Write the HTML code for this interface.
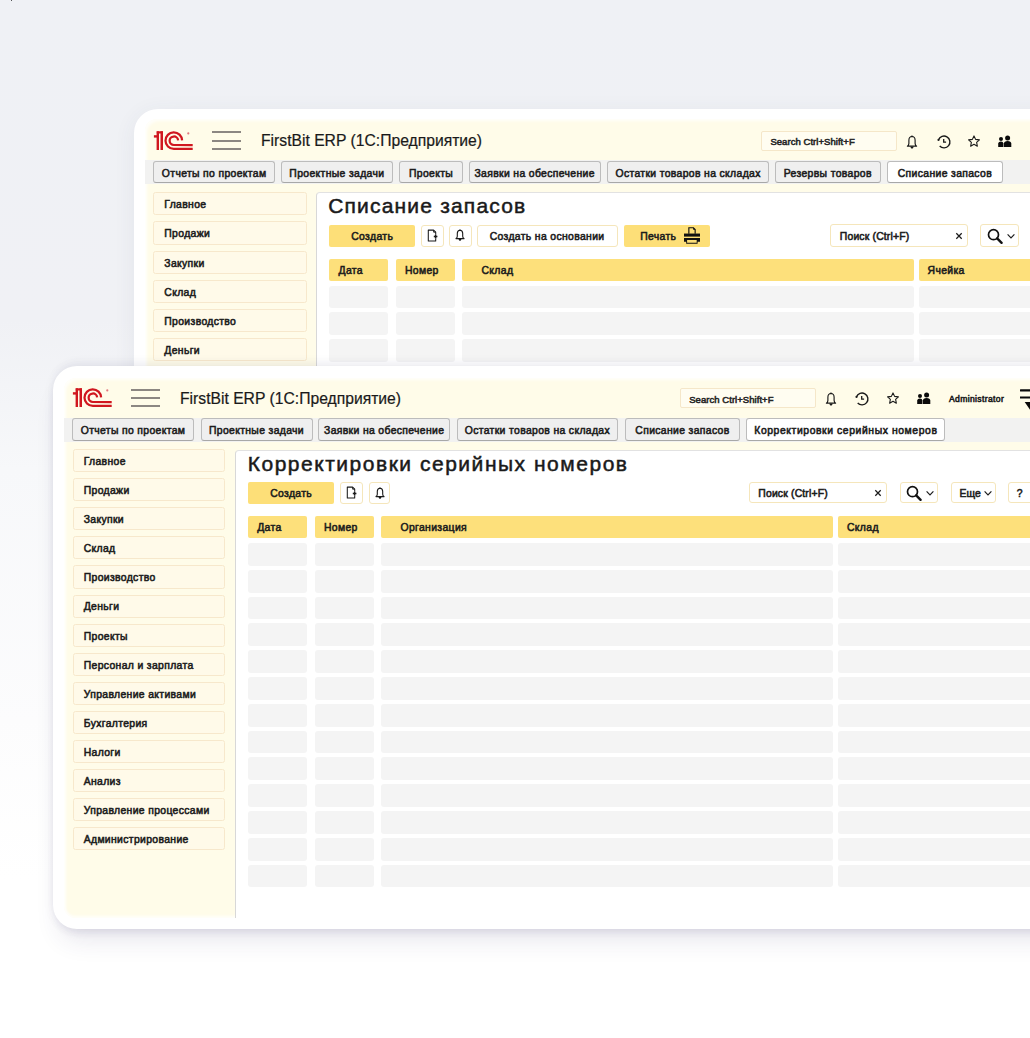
<!DOCTYPE html><html><head><meta charset="utf-8"><style>
*{margin:0;padding:0;box-sizing:border-box}
html,body{width:1030px;height:1038px;overflow:hidden}
body{position:relative;font-family:"Liberation Sans",sans-serif;color:#1e1e1e;
 background:linear-gradient(180deg,#eff1f5 0px,#f0f1f5 320px,#f7f8fa 470px,#fcfcfd 720px,#ffffff 880px)}
.a{position:absolute}
.t{position:absolute;white-space:nowrap;line-height:1}
.ham{position:absolute;width:29.6px;height:2.2px;background:#8c8782}
.search{position:absolute;background:#fffdf1;border:1px solid #f5e7c9;border-radius:2px}
.band{position:absolute;background:#f2f2f1}
.tab{position:absolute;background:#efefef;border:1px solid #bcbcbc;border-bottom:1.6px solid #a8a8a8;border-radius:3px}
.tab.act{background:#fff}
.side{position:absolute;background:#fffae9;border:1px solid #f7e8cc;border-radius:2.5px}
.yb{position:absolute;background:#fddf78;border-radius:2px}
.wb{position:absolute;background:#fff;border:1px solid #f5e6bb;border-radius:3px}
.hd{position:absolute;background:#fde07b;border-radius:2px}
.row{position:absolute;background:#f4f4f4;border-radius:3px}
</style></head><body>
<div class="a" style="left:10.6px;top:0;width:1.6px;height:1.2px;background:#222;border-radius:1px"></div>
<div class="a" style="left:134px;top:109px;width:966px;height:700px;background:#fff;border-radius:24px 0 0 24px;box-shadow:0 4px 22px rgba(60,70,100,0.07)"></div>
<div class="a" style="left:144.5px;top:119px;width:955.5px;height:600px;background:#fffce9;border-radius:12px 0 0 12px;box-shadow:inset 2px 2px 3px rgba(255,255,255,0.8),inset 0 -2px 3px rgba(255,255,255,0.8)"></div>
<div class="a" style="left:315.7px;top:192px;width:784.3px;height:600px;background:#fff;border-left:1px solid #d8d8d8;border-top:1px solid #e2e2e2;border-radius:4px 0 0 0"></div>
<svg class="a" style="left:150px;top:125px" width="46" height="28" viewBox="0 0 46 28">
<g fill="#d0171f">
<rect x="6.8" y="6.3" width="6.1" height="2.2"/>
<rect x="6.6" y="6.3" width="2.4" height="18.7"/>
<rect x="10.5" y="6.3" width="2.5" height="18.7"/>
<rect x="3.9" y="10.2" width="5" height="2.4"/>
</g>
<g fill="none" stroke="#d0171f" stroke-width="2.25">
<path d="M32.1 15.4 A8.3 8.3 0 1 0 23.8 23.95 L42.7 23.95"/>
<path d="M28.1 15.4 A4.25 4.25 0 1 0 23.8 20.0 L42.7 20.0"/>
</g>
<circle cx="38.3" cy="8.4" r="1.1" fill="#e07a80"/>
</svg>
<div class="ham" style="left:211.7px;top:131.30px"></div>
<div class="ham" style="left:211.7px;top:139.60px"></div>
<div class="ham" style="left:211.7px;top:147.70px"></div>
<div class="t" style="left:261.00px;top:133.11px;font-size:15.7px;font-weight:400;color:#1a1a1a;letter-spacing:0px;-webkit-text-stroke:0.2px #1a1a1a">FirstBit ERP (1С:Предприятие)</div>
<div class="search" style="left:761.00px;top:131.00px;width:135.70px;height:19.60px;" ></div>
<div class="t" style="left:770.40px;top:137.43px;font-size:9.50px;font-weight:400;-webkit-text-stroke:0.55px #262626;color:#262626;letter-spacing:0.04999999999999999px;">Search Ctrl+Shift+F</div>
<svg class="a" style="left:903.3px;top:132.6px" width="18" height="18" viewBox="-9 -9 18 18"><g transform="scale(1.15)">
<path d="M-4.0 3.6 Q-2.8 2.9 -2.7 1.2 L-2.7 -1.6 Q-2.7 -4.6 0 -4.8 Q2.7 -4.6 2.7 -1.6 L2.7 1.2 Q2.8 2.9 4.0 3.6 Z" fill="none" stroke="#1a1a1a" stroke-width="1.0" stroke-linejoin="round"/>
<path d="M-0.9 -4.5 L0 -6.0 L0.9 -4.5 Z" fill="#1a1a1a"/>
<path d="M-1.5 4.0 L1.5 4.0 Q1.2 5.8 0 5.9 Q-1.2 5.8 -1.5 4.0 Z" fill="#1a1a1a"/></g></svg>
<svg class="a" style="left:934.6px;top:132.5px" width="18" height="18" viewBox="-9 -9 18 18"><g fill="none" stroke="#1a1a1a" stroke-width="1.4">
<path d="M-5.51 -2.11 A5.9 5.9 0 1 1 -4.31 4.02"/>
<path d="M-0.3 -2.9 L-0.3 0.1 L2.1 0.1" stroke-width="1.3"/></g>
<circle cx="-5.51" cy="-2.11" r="1.05" fill="#1a1a1a"/></svg>
<svg class="a" style="left:966.3px;top:133.0px" width="16" height="16" viewBox="-8 -8 16 16"><polygon points="0.00,-5.70 1.62,-2.22 5.42,-1.76 2.62,0.85 3.35,4.61 0.00,2.75 -3.35,4.61 -2.62,0.85 -5.42,-1.76 -1.62,-2.22" fill="none" stroke="#1a1a1a" stroke-width="1.1" stroke-linejoin="round" transform="translate(0,0.6)"/></svg>
<svg class="a" style="left:998.3px;top:134.6px" width="14" height="13" viewBox="0 0 14 13"><g fill="#0a0a0a">
<circle cx="3" cy="4.0" r="2.0"/><path d="M0.2 12 L0.2 8.6 Q0.4 6.6 3 6.6 Q5.2 6.6 5.4 8.6 L5.4 12 Z"/>
<circle cx="9.6" cy="2.9" r="2.5"/><path d="M5.9 12 L5.9 8.4 Q6.1 5.9 9.6 5.9 Q13.1 5.9 13.3 8.4 L13.3 12 Z"/>
</g></svg>
<div class="band" style="left:144.50px;top:160.00px;width:955.50px;height:24.00px;" ></div>
<div class="tab" style="left:152.80px;top:160.80px;width:122.70px;height:22.40px;" ></div>
<div class="t" style="left:153.30px;width:121.70px;text-align:center;top:168.97px;font-size:10.40px;font-weight:400;-webkit-text-stroke:0.55px #1c1c1c;color:#1c1c1c;letter-spacing:0.35px">Отчеты по проектам</div>
<div class="tab" style="left:281.00px;top:160.80px;width:111.80px;height:22.40px;" ></div>
<div class="t" style="left:281.50px;width:110.80px;text-align:center;top:168.97px;font-size:10.40px;font-weight:400;-webkit-text-stroke:0.55px #1c1c1c;color:#1c1c1c;letter-spacing:0.35px">Проектные задачи</div>
<div class="tab" style="left:399.30px;top:160.80px;width:63.50px;height:22.40px;" ></div>
<div class="t" style="left:399.80px;width:62.50px;text-align:center;top:168.97px;font-size:10.40px;font-weight:400;-webkit-text-stroke:0.55px #1c1c1c;color:#1c1c1c;letter-spacing:0.35px">Проекты</div>
<div class="tab" style="left:468.50px;top:160.80px;width:132.30px;height:22.40px;" ></div>
<div class="t" style="left:469.00px;width:131.30px;text-align:center;top:168.97px;font-size:10.40px;font-weight:400;-webkit-text-stroke:0.55px #1c1c1c;color:#1c1c1c;letter-spacing:0.35px">Заявки на обеспечение</div>
<div class="tab" style="left:607.00px;top:160.80px;width:162.20px;height:22.40px;" ></div>
<div class="t" style="left:607.50px;width:161.20px;text-align:center;top:168.97px;font-size:10.40px;font-weight:400;-webkit-text-stroke:0.55px #1c1c1c;color:#1c1c1c;letter-spacing:0.35px">Остатки товаров на складах</div>
<div class="tab" style="left:774.90px;top:160.80px;width:105.80px;height:22.40px;" ></div>
<div class="t" style="left:775.40px;width:104.80px;text-align:center;top:168.97px;font-size:10.40px;font-weight:400;-webkit-text-stroke:0.55px #1c1c1c;color:#1c1c1c;letter-spacing:0.35px">Резервы товаров</div>
<div class="tab act" style="left:886.80px;top:160.80px;width:116.20px;height:22.40px;" ></div>
<div class="t" style="left:887.30px;width:115.20px;text-align:center;top:168.97px;font-size:10.40px;font-weight:400;-webkit-text-stroke:0.55px #1c1c1c;color:#1c1c1c;letter-spacing:0.35px">Списание запасов</div>
<div class="side" style="left:153.30px;top:192.20px;width:153.70px;height:23.20px;" ></div>
<div class="t" style="left:164.30px;top:200.17px;font-size:10.40px;font-weight:400;-webkit-text-stroke:0.55px #1c1c1c;color:#1c1c1c;letter-spacing:0.35px;">Главное</div>
<div class="side" style="left:153.30px;top:221.40px;width:153.70px;height:23.20px;" ></div>
<div class="t" style="left:164.30px;top:229.37px;font-size:10.40px;font-weight:400;-webkit-text-stroke:0.55px #1c1c1c;color:#1c1c1c;letter-spacing:0.35px;">Продажи</div>
<div class="side" style="left:153.30px;top:250.60px;width:153.70px;height:23.20px;" ></div>
<div class="t" style="left:164.30px;top:258.57px;font-size:10.40px;font-weight:400;-webkit-text-stroke:0.55px #1c1c1c;color:#1c1c1c;letter-spacing:0.35px;">Закупки</div>
<div class="side" style="left:153.30px;top:279.80px;width:153.70px;height:23.20px;" ></div>
<div class="t" style="left:164.30px;top:287.77px;font-size:10.40px;font-weight:400;-webkit-text-stroke:0.55px #1c1c1c;color:#1c1c1c;letter-spacing:0.35px;">Склад</div>
<div class="side" style="left:153.30px;top:309.00px;width:153.70px;height:23.20px;" ></div>
<div class="t" style="left:164.30px;top:316.97px;font-size:10.40px;font-weight:400;-webkit-text-stroke:0.55px #1c1c1c;color:#1c1c1c;letter-spacing:0.35px;">Производство</div>
<div class="side" style="left:153.30px;top:338.20px;width:153.70px;height:23.20px;" ></div>
<div class="t" style="left:164.30px;top:346.17px;font-size:10.40px;font-weight:400;-webkit-text-stroke:0.55px #1c1c1c;color:#1c1c1c;letter-spacing:0.35px;">Деньги</div>
<div class="side" style="left:153.30px;top:367.40px;width:153.70px;height:23.20px;" ></div>
<div class="t" style="left:164.30px;top:375.37px;font-size:10.40px;font-weight:400;-webkit-text-stroke:0.55px #1c1c1c;color:#1c1c1c;letter-spacing:0.35px;">Проекты</div>
<div class="t" style="left:328.20px;top:195.12px;font-size:21px;font-weight:400;color:#1a1a1a;letter-spacing:1.19px;-webkit-text-stroke:0.5px #1a1a1a">Списание запасов</div>
<div class="yb" style="left:329.00px;top:224.50px;width:86.40px;height:22.50px;" ></div>
<div class="t" style="left:351.25px;top:232.07px;font-size:10.40px;font-weight:400;-webkit-text-stroke:0.55px #1c1c1c;color:#1c1c1c;letter-spacing:0.35px;">Создать</div>
<div class="wb" style="left:421.40px;top:224.50px;width:22.30px;height:22.50px;" ></div>
<svg class="a" style="left:424.6px;top:227.6px" width="16" height="16" viewBox="-8 -8 16 16"><g fill="none" stroke="#1a1a1a" stroke-width="1.05" stroke-linejoin="round">
<path d="M2.7 2.4 L2.7 4.9 L-4.7 4.9 L-4.7 -5.9 L0.6 -5.9 L2.7 -3.8 L2.7 -1.3"/><path d="M0.6 -5.9 L0.6 -3.8 L2.7 -3.8" stroke-width="0.9"/></g>
<path d="M2.6 -1.2 L2.6 2.4 M0.8 0.6 L4.4 0.6" stroke="#1a1a1a" stroke-width="1.5"/></svg>
<div class="wb" style="left:449.00px;top:224.50px;width:22.70px;height:22.50px;" ></div>
<svg class="a" style="left:451.4px;top:226.3px" width="18" height="18" viewBox="-9 -9 18 18"><g transform="scale(1.0)">
<path d="M-4.0 3.6 Q-2.8 2.9 -2.7 1.2 L-2.7 -1.6 Q-2.7 -4.6 0 -4.8 Q2.7 -4.6 2.7 -1.6 L2.7 1.2 Q2.8 2.9 4.0 3.6 Z" fill="none" stroke="#1a1a1a" stroke-width="1.1" stroke-linejoin="round"/>
<path d="M-0.9 -4.5 L0 -6.0 L0.9 -4.5 Z" fill="#1a1a1a"/>
<path d="M-1.5 4.0 L1.5 4.0 Q1.2 5.8 0 5.9 Q-1.2 5.8 -1.5 4.0 Z" fill="#1a1a1a"/></g></svg>
<div class="wb" style="left:476.80px;top:224.50px;width:140.80px;height:22.50px;" ></div>
<div class="t" style="left:489.70px;top:232.07px;font-size:10.40px;font-weight:400;-webkit-text-stroke:0.55px #1c1c1c;color:#1c1c1c;letter-spacing:0.35px;">Создать на основании</div>
<div class="yb" style="left:623.70px;top:224.50px;width:86.60px;height:22.50px;" ></div>
<div class="t" style="left:640.20px;top:232.07px;font-size:10.40px;font-weight:400;-webkit-text-stroke:0.55px #1c1c1c;color:#1c1c1c;letter-spacing:0.35px;">Печать</div>
<svg class="a" style="left:675px;top:222px" width="35" height="28" viewBox="0 0 35 28">
<path d="M13.85 11.8 V5.75 H18.4 L20.15 7.5 V11.8" fill="none" stroke="#111" stroke-width="1.15"/>
<path d="M18.2 5.6 L20.3 7.7 L18.2 7.7 Z" fill="#111"/>
<rect x="9" y="11.55" width="16" height="3.05" fill="#111"/>
<path fill-rule="evenodd" fill="#111" d="M9 16 H25 V19.7 H22.6 V21.75 H11.2 V19.7 H9 Z M12.1 18.0 V20.75 H21.7 V18.0 Z"/>
</svg>
<div class="wb" style="left:830.20px;top:224.20px;width:137.60px;height:22.80px;" ></div>
<div class="t" style="left:839.80px;top:232.07px;font-size:10.40px;font-weight:400;-webkit-text-stroke:0.55px #1c1c1c;color:#1c1c1c;letter-spacing:0.16999999999999998px;">Поиск (Ctrl+F)</div>
<svg class="a" style="left:954.2px;top:231px" width="10" height="10" viewBox="-5 -5 10 10"><path d="M-2.7 -2.7 L2.7 2.7 M2.7 -2.7 L-2.7 2.7" stroke="#1a1a1a" stroke-width="1.25"/></svg>
<div class="wb" style="left:980.40px;top:224.20px;width:39.00px;height:22.80px;" ></div>
<svg class="a" style="left:985px;top:225.6px" width="20" height="20" viewBox="-10 -10 20 20"><g fill="none" stroke="#111" >
<circle cx="-1.5" cy="-1.3" r="5.0" stroke-width="1.7"/><path d="M2.2 2.4 L6.6 6.8" stroke-width="2.4" stroke-linecap="round"/></g></svg>
<svg class="a" style="left:1005.6px;top:232px" width="10" height="8" viewBox="-5 -4 10 8"><path d="M-3.4 -1.6 L0 1.8 L3.4 -1.6" fill="none" stroke="#1c1c1c" stroke-width="1.2"/></svg>
<div class="hd" style="left:329.30px;top:259.30px;width:58.70px;height:21.90px;" ></div>
<div class="t" style="left:338.50px;top:266.47px;font-size:10.40px;font-weight:400;-webkit-text-stroke:0.55px #1c1c1c;color:#1c1c1c;letter-spacing:0.35px;">Дата</div>
<div class="hd" style="left:395.80px;top:259.30px;width:59.00px;height:21.90px;" ></div>
<div class="t" style="left:405.00px;top:266.47px;font-size:10.40px;font-weight:400;-webkit-text-stroke:0.55px #1c1c1c;color:#1c1c1c;letter-spacing:0.35px;">Номер</div>
<div class="hd" style="left:462.10px;top:259.30px;width:451.70px;height:21.90px;" ></div>
<div class="t" style="left:481.50px;top:266.47px;font-size:10.40px;font-weight:400;-webkit-text-stroke:0.55px #1c1c1c;color:#1c1c1c;letter-spacing:0.35px;">Склад</div>
<div class="hd" style="left:918.50px;top:259.30px;width:181.50px;height:21.90px;" ></div>
<div class="t" style="left:927.60px;top:266.47px;font-size:10.40px;font-weight:400;-webkit-text-stroke:0.55px #1c1c1c;color:#1c1c1c;letter-spacing:0.35px;">Ячейка</div>
<div class="row" style="left:329.30px;top:285.60px;width:58.70px;height:22.90px;" ></div>
<div class="row" style="left:395.80px;top:285.60px;width:59.00px;height:22.90px;" ></div>
<div class="row" style="left:462.10px;top:285.60px;width:451.70px;height:22.90px;" ></div>
<div class="row" style="left:918.50px;top:285.60px;width:181.50px;height:22.90px;" ></div>
<div class="row" style="left:329.30px;top:312.40px;width:58.70px;height:22.90px;" ></div>
<div class="row" style="left:395.80px;top:312.40px;width:59.00px;height:22.90px;" ></div>
<div class="row" style="left:462.10px;top:312.40px;width:451.70px;height:22.90px;" ></div>
<div class="row" style="left:918.50px;top:312.40px;width:181.50px;height:22.90px;" ></div>
<div class="row" style="left:329.30px;top:339.20px;width:58.70px;height:22.90px;" ></div>
<div class="row" style="left:395.80px;top:339.20px;width:59.00px;height:22.90px;" ></div>
<div class="row" style="left:462.10px;top:339.20px;width:451.70px;height:22.90px;" ></div>
<div class="row" style="left:918.50px;top:339.20px;width:181.50px;height:22.90px;" ></div>
<div class="a" style="left:53px;top:366.0px;width:1047px;height:562.7px;background:#fff;border-radius:24px 0 0 24px;box-shadow:0 5px 8px -2px rgba(50,45,100,0.09),0 18px 26px -8px rgba(50,45,100,0.12),0 0 14px rgba(50,45,100,0.035),0 -6px 10px -3px rgba(60,70,100,0.08)"></div>
<div class="a" style="left:64px;top:378px;width:1036px;height:539.6px;background:#fffce9;border-radius:12px 0 0 12px;box-shadow:inset 2px 2px 3px rgba(255,255,255,0.8),inset 0 -2px 3px rgba(255,255,255,0.8)"></div>
<div class="a" style="left:234.8px;top:450px;width:865.2px;height:467.6px;background:#fff;border-left:1px solid #d8d8d8;border-top:1px solid #e2e2e2;border-radius:4px 0 0 0"></div>
<div class="a" style="left:235.8px;top:916.6px;width:865.2px;height:12.100000000000023px;background:#fff"></div>
<svg class="a" style="left:68.7px;top:382px" width="46" height="28" viewBox="0 0 46 28">
<g fill="#d0171f">
<rect x="6.8" y="6.3" width="6.1" height="2.2"/>
<rect x="6.6" y="6.3" width="2.4" height="18.7"/>
<rect x="10.5" y="6.3" width="2.5" height="18.7"/>
<rect x="3.9" y="10.2" width="5" height="2.4"/>
</g>
<g fill="none" stroke="#d0171f" stroke-width="2.25">
<path d="M32.1 15.4 A8.3 8.3 0 1 0 23.8 23.95 L42.7 23.95"/>
<path d="M28.1 15.4 A4.25 4.25 0 1 0 23.8 20.0 L42.7 20.0"/>
</g>
<circle cx="38.3" cy="8.4" r="1.1" fill="#e07a80"/>
</svg>
<div class="ham" style="left:130.7px;top:388.80px"></div>
<div class="ham" style="left:130.7px;top:397.10px"></div>
<div class="ham" style="left:130.7px;top:405.20px"></div>
<div class="t" style="left:180.00px;top:390.61px;font-size:15.7px;font-weight:400;color:#1a1a1a;letter-spacing:0px;-webkit-text-stroke:0.2px #1a1a1a">FirstBit ERP (1С:Предприятие)</div>
<div class="search" style="left:679.80px;top:387.90px;width:136.30px;height:19.70px;" ></div>
<div class="t" style="left:689.20px;top:394.63px;font-size:9.50px;font-weight:400;-webkit-text-stroke:0.55px #262626;color:#262626;letter-spacing:0.04999999999999999px;">Search Ctrl+Shift+F</div>
<svg class="a" style="left:822.2px;top:389.8px" width="18" height="18" viewBox="-9 -9 18 18"><g transform="scale(1.15)">
<path d="M-4.0 3.6 Q-2.8 2.9 -2.7 1.2 L-2.7 -1.6 Q-2.7 -4.6 0 -4.8 Q2.7 -4.6 2.7 -1.6 L2.7 1.2 Q2.8 2.9 4.0 3.6 Z" fill="none" stroke="#1a1a1a" stroke-width="1.0" stroke-linejoin="round"/>
<path d="M-0.9 -4.5 L0 -6.0 L0.9 -4.5 Z" fill="#1a1a1a"/>
<path d="M-1.5 4.0 L1.5 4.0 Q1.2 5.8 0 5.9 Q-1.2 5.8 -1.5 4.0 Z" fill="#1a1a1a"/></g></svg>
<svg class="a" style="left:853.4px;top:389.8px" width="18" height="18" viewBox="-9 -9 18 18"><g fill="none" stroke="#1a1a1a" stroke-width="1.4">
<path d="M-5.51 -2.11 A5.9 5.9 0 1 1 -4.31 4.02"/>
<path d="M-0.3 -2.9 L-0.3 0.1 L2.1 0.1" stroke-width="1.3"/></g>
<circle cx="-5.51" cy="-2.11" r="1.05" fill="#1a1a1a"/></svg>
<svg class="a" style="left:885px;top:390.4px" width="16" height="16" viewBox="-8 -8 16 16"><polygon points="0.00,-5.70 1.62,-2.22 5.42,-1.76 2.62,0.85 3.35,4.61 0.00,2.75 -3.35,4.61 -2.62,0.85 -5.42,-1.76 -1.62,-2.22" fill="none" stroke="#1a1a1a" stroke-width="1.1" stroke-linejoin="round" transform="translate(0,0.6)"/></svg>
<svg class="a" style="left:917.2px;top:391.8px" width="14" height="13" viewBox="0 0 14 13"><g fill="#0a0a0a">
<circle cx="3" cy="4.0" r="2.0"/><path d="M0.2 12 L0.2 8.6 Q0.4 6.6 3 6.6 Q5.2 6.6 5.4 8.6 L5.4 12 Z"/>
<circle cx="9.6" cy="2.9" r="2.5"/><path d="M5.9 12 L5.9 8.4 Q6.1 5.9 9.6 5.9 Q13.1 5.9 13.3 8.4 L13.3 12 Z"/>
</g></svg>
<div class="t" style="left:949.00px;top:395.49px;font-size:8.60px;font-weight:400;-webkit-text-stroke:0.55px #1c1c1c;color:#1c1c1c;letter-spacing:0.35px;">Administrator</div>
<svg class="a" style="left:1019.9px;top:388.6px" width="22" height="24" viewBox="0 0 22 24"><g fill="#0a0a0a">
<rect x="-0.4" y="0.3" width="22" height="2.2" rx="1.1"/><rect x="-0.4" y="7.4" width="22" height="2.2" rx="1.1"/>
<path d="M4.7 13 L17.7 13 L11.2 22.4 Z"/></g></svg>
<div class="band" style="left:64.00px;top:417.50px;width:1036.00px;height:24.00px;" ></div>
<div class="tab" style="left:72.30px;top:418.30px;width:121.50px;height:22.40px;" ></div>
<div class="t" style="left:72.80px;width:120.50px;text-align:center;top:426.47px;font-size:10.40px;font-weight:400;-webkit-text-stroke:0.55px #1c1c1c;color:#1c1c1c;letter-spacing:0.35px">Отчеты по проектам</div>
<div class="tab" style="left:200.50px;top:418.30px;width:112.00px;height:22.40px;" ></div>
<div class="t" style="left:201.00px;width:111.00px;text-align:center;top:426.47px;font-size:10.40px;font-weight:400;-webkit-text-stroke:0.55px #1c1c1c;color:#1c1c1c;letter-spacing:0.35px">Проектные задачи</div>
<div class="tab" style="left:317.90px;top:418.30px;width:132.60px;height:22.40px;" ></div>
<div class="t" style="left:318.40px;width:131.60px;text-align:center;top:426.47px;font-size:10.40px;font-weight:400;-webkit-text-stroke:0.55px #1c1c1c;color:#1c1c1c;letter-spacing:0.35px">Заявки на обеспечение</div>
<div class="tab" style="left:456.80px;top:418.30px;width:161.20px;height:22.40px;" ></div>
<div class="t" style="left:457.30px;width:160.20px;text-align:center;top:426.47px;font-size:10.40px;font-weight:400;-webkit-text-stroke:0.55px #1c1c1c;color:#1c1c1c;letter-spacing:0.35px">Остатки товаров на складах</div>
<div class="tab" style="left:624.70px;top:418.30px;width:115.60px;height:22.40px;" ></div>
<div class="t" style="left:625.20px;width:114.60px;text-align:center;top:426.47px;font-size:10.40px;font-weight:400;-webkit-text-stroke:0.55px #1c1c1c;color:#1c1c1c;letter-spacing:0.35px">Списание запасов</div>
<div class="tab act" style="left:746.30px;top:418.30px;width:199.20px;height:22.40px;" ></div>
<div class="t" style="left:746.80px;width:198.20px;text-align:center;top:426.47px;font-size:10.40px;font-weight:400;-webkit-text-stroke:0.55px #1c1c1c;color:#1c1c1c;letter-spacing:0.58px">Корректировки серийных номеров</div>
<div class="side" style="left:72.70px;top:449.00px;width:152.70px;height:23.20px;" ></div>
<div class="t" style="left:83.70px;top:456.97px;font-size:10.40px;font-weight:400;-webkit-text-stroke:0.55px #1c1c1c;color:#1c1c1c;letter-spacing:0.35px;">Главное</div>
<div class="side" style="left:72.70px;top:478.10px;width:152.70px;height:23.20px;" ></div>
<div class="t" style="left:83.70px;top:486.07px;font-size:10.40px;font-weight:400;-webkit-text-stroke:0.55px #1c1c1c;color:#1c1c1c;letter-spacing:0.35px;">Продажи</div>
<div class="side" style="left:72.70px;top:507.20px;width:152.70px;height:23.20px;" ></div>
<div class="t" style="left:83.70px;top:515.17px;font-size:10.40px;font-weight:400;-webkit-text-stroke:0.55px #1c1c1c;color:#1c1c1c;letter-spacing:0.35px;">Закупки</div>
<div class="side" style="left:72.70px;top:536.30px;width:152.70px;height:23.20px;" ></div>
<div class="t" style="left:83.70px;top:544.27px;font-size:10.40px;font-weight:400;-webkit-text-stroke:0.55px #1c1c1c;color:#1c1c1c;letter-spacing:0.35px;">Склад</div>
<div class="side" style="left:72.70px;top:565.40px;width:152.70px;height:23.20px;" ></div>
<div class="t" style="left:83.70px;top:573.37px;font-size:10.40px;font-weight:400;-webkit-text-stroke:0.55px #1c1c1c;color:#1c1c1c;letter-spacing:0.35px;">Производство</div>
<div class="side" style="left:72.70px;top:594.50px;width:152.70px;height:23.20px;" ></div>
<div class="t" style="left:83.70px;top:602.47px;font-size:10.40px;font-weight:400;-webkit-text-stroke:0.55px #1c1c1c;color:#1c1c1c;letter-spacing:0.35px;">Деньги</div>
<div class="side" style="left:72.70px;top:623.60px;width:152.70px;height:23.20px;" ></div>
<div class="t" style="left:83.70px;top:631.57px;font-size:10.40px;font-weight:400;-webkit-text-stroke:0.55px #1c1c1c;color:#1c1c1c;letter-spacing:0.35px;">Проекты</div>
<div class="side" style="left:72.70px;top:652.70px;width:152.70px;height:23.20px;" ></div>
<div class="t" style="left:83.70px;top:660.67px;font-size:10.40px;font-weight:400;-webkit-text-stroke:0.55px #1c1c1c;color:#1c1c1c;letter-spacing:0.35px;">Персонал и зарплата</div>
<div class="side" style="left:72.70px;top:681.80px;width:152.70px;height:23.20px;" ></div>
<div class="t" style="left:83.70px;top:689.77px;font-size:10.40px;font-weight:400;-webkit-text-stroke:0.55px #1c1c1c;color:#1c1c1c;letter-spacing:0.35px;">Управление активами</div>
<div class="side" style="left:72.70px;top:710.90px;width:152.70px;height:23.20px;" ></div>
<div class="t" style="left:83.70px;top:718.87px;font-size:10.40px;font-weight:400;-webkit-text-stroke:0.55px #1c1c1c;color:#1c1c1c;letter-spacing:0.35px;">Бухгалтерия</div>
<div class="side" style="left:72.70px;top:740.00px;width:152.70px;height:23.20px;" ></div>
<div class="t" style="left:83.70px;top:747.97px;font-size:10.40px;font-weight:400;-webkit-text-stroke:0.55px #1c1c1c;color:#1c1c1c;letter-spacing:0.35px;">Налоги</div>
<div class="side" style="left:72.70px;top:769.10px;width:152.70px;height:23.20px;" ></div>
<div class="t" style="left:83.70px;top:777.07px;font-size:10.40px;font-weight:400;-webkit-text-stroke:0.55px #1c1c1c;color:#1c1c1c;letter-spacing:0.35px;">Анализ</div>
<div class="side" style="left:72.70px;top:798.20px;width:152.70px;height:23.20px;" ></div>
<div class="t" style="left:83.70px;top:806.17px;font-size:10.40px;font-weight:400;-webkit-text-stroke:0.55px #1c1c1c;color:#1c1c1c;letter-spacing:0.35px;">Управление процессами</div>
<div class="side" style="left:72.70px;top:827.30px;width:152.70px;height:23.20px;" ></div>
<div class="t" style="left:83.70px;top:835.27px;font-size:10.40px;font-weight:400;-webkit-text-stroke:0.55px #1c1c1c;color:#1c1c1c;letter-spacing:0.35px;">Администрирование</div>
<div class="t" style="left:247.70px;top:453.02px;font-size:21px;font-weight:400;color:#1a1a1a;letter-spacing:1.52px;-webkit-text-stroke:0.5px #1a1a1a">Корректировки серийных номеров</div>
<div class="yb" style="left:248.00px;top:481.80px;width:86.30px;height:21.90px;" ></div>
<div class="t" style="left:270.20px;top:489.27px;font-size:10.40px;font-weight:400;-webkit-text-stroke:0.55px #1c1c1c;color:#1c1c1c;letter-spacing:0.35px;">Создать</div>
<div class="wb" style="left:340.30px;top:481.80px;width:22.30px;height:21.90px;" ></div>
<svg class="a" style="left:343.5px;top:484.8px" width="16" height="16" viewBox="-8 -8 16 16"><g fill="none" stroke="#1a1a1a" stroke-width="1.05" stroke-linejoin="round">
<path d="M2.7 2.4 L2.7 4.9 L-4.7 4.9 L-4.7 -5.9 L0.6 -5.9 L2.7 -3.8 L2.7 -1.3"/><path d="M0.6 -5.9 L0.6 -3.8 L2.7 -3.8" stroke-width="0.9"/></g>
<path d="M2.6 -1.2 L2.6 2.4 M0.8 0.6 L4.4 0.6" stroke="#1a1a1a" stroke-width="1.5"/></svg>
<div class="wb" style="left:368.50px;top:481.80px;width:21.90px;height:21.90px;" ></div>
<svg class="a" style="left:370.5px;top:483.6px" width="18" height="18" viewBox="-9 -9 18 18"><g transform="scale(1.0)">
<path d="M-4.0 3.6 Q-2.8 2.9 -2.7 1.2 L-2.7 -1.6 Q-2.7 -4.6 0 -4.8 Q2.7 -4.6 2.7 -1.6 L2.7 1.2 Q2.8 2.9 4.0 3.6 Z" fill="none" stroke="#1a1a1a" stroke-width="1.1" stroke-linejoin="round"/>
<path d="M-0.9 -4.5 L0 -6.0 L0.9 -4.5 Z" fill="#1a1a1a"/>
<path d="M-1.5 4.0 L1.5 4.0 Q1.2 5.8 0 5.9 Q-1.2 5.8 -1.5 4.0 Z" fill="#1a1a1a"/></g></svg>
<div class="wb" style="left:749.30px;top:481.80px;width:137.70px;height:21.40px;" ></div>
<div class="t" style="left:758.30px;top:489.27px;font-size:10.40px;font-weight:400;-webkit-text-stroke:0.55px #1c1c1c;color:#1c1c1c;letter-spacing:0.16999999999999998px;">Поиск (Ctrl+F)</div>
<svg class="a" style="left:873px;top:488px" width="10" height="10" viewBox="-5 -5 10 10"><path d="M-2.7 -2.7 L2.7 2.7 M2.7 -2.7 L-2.7 2.7" stroke="#1a1a1a" stroke-width="1.25"/></svg>
<div class="wb" style="left:899.60px;top:481.80px;width:38.90px;height:21.40px;" ></div>
<svg class="a" style="left:904.2px;top:482.6px" width="20" height="20" viewBox="-10 -10 20 20"><g fill="none" stroke="#111" >
<circle cx="-1.5" cy="-1.3" r="5.0" stroke-width="1.7"/><path d="M2.2 2.4 L6.6 6.8" stroke-width="2.4" stroke-linecap="round"/></g></svg>
<svg class="a" style="left:924.8px;top:489px" width="10" height="8" viewBox="-5 -4 10 8"><path d="M-3.4 -1.6 L0 1.8 L3.4 -1.6" fill="none" stroke="#1c1c1c" stroke-width="1.2"/></svg>
<div class="wb" style="left:951.00px;top:481.80px;width:44.60px;height:21.40px;" ></div>
<div class="t" style="left:959.40px;top:489.27px;font-size:10.40px;font-weight:400;-webkit-text-stroke:0.55px #1c1c1c;color:#1c1c1c;letter-spacing:0.09999999999999998px;">Еще</div>
<svg class="a" style="left:982.5px;top:489px" width="10" height="8" viewBox="-5 -4 10 8"><path d="M-3.4 -1.6 L0 1.8 L3.4 -1.6" fill="none" stroke="#1c1c1c" stroke-width="1.2"/></svg>
<div class="wb" style="left:1008.30px;top:481.80px;width:51.70px;height:21.40px;" ></div>
<div class="t" style="left:1016.80px;top:489.27px;font-size:10.40px;font-weight:400;-webkit-text-stroke:0.55px #1c1c1c;color:#1c1c1c;letter-spacing:0.35px;">?</div>
<div class="hd" style="left:248.00px;top:516.30px;width:59.20px;height:21.60px;" ></div>
<div class="t" style="left:257.20px;top:523.47px;font-size:10.40px;font-weight:400;-webkit-text-stroke:0.55px #1c1c1c;color:#1c1c1c;letter-spacing:0.35px;">Дата</div>
<div class="hd" style="left:314.80px;top:516.30px;width:59.30px;height:21.60px;" ></div>
<div class="t" style="left:324.00px;top:523.47px;font-size:10.40px;font-weight:400;-webkit-text-stroke:0.55px #1c1c1c;color:#1c1c1c;letter-spacing:0.35px;">Номер</div>
<div class="hd" style="left:381.30px;top:516.30px;width:451.60px;height:21.60px;" ></div>
<div class="t" style="left:400.50px;top:523.47px;font-size:10.40px;font-weight:400;-webkit-text-stroke:0.55px #1c1c1c;color:#1c1c1c;letter-spacing:0.35px;">Организация</div>
<div class="hd" style="left:837.70px;top:516.30px;width:262.30px;height:21.60px;" ></div>
<div class="t" style="left:847.00px;top:523.47px;font-size:10.40px;font-weight:400;-webkit-text-stroke:0.55px #1c1c1c;color:#1c1c1c;letter-spacing:0.35px;">Склад</div>
<div class="row" style="left:248.00px;top:543.00px;width:59.20px;height:22.90px;" ></div>
<div class="row" style="left:314.80px;top:543.00px;width:59.30px;height:22.90px;" ></div>
<div class="row" style="left:381.30px;top:543.00px;width:451.60px;height:22.90px;" ></div>
<div class="row" style="left:837.70px;top:543.00px;width:262.30px;height:22.90px;" ></div>
<div class="row" style="left:248.00px;top:569.80px;width:59.20px;height:22.90px;" ></div>
<div class="row" style="left:314.80px;top:569.80px;width:59.30px;height:22.90px;" ></div>
<div class="row" style="left:381.30px;top:569.80px;width:451.60px;height:22.90px;" ></div>
<div class="row" style="left:837.70px;top:569.80px;width:262.30px;height:22.90px;" ></div>
<div class="row" style="left:248.00px;top:596.60px;width:59.20px;height:22.90px;" ></div>
<div class="row" style="left:314.80px;top:596.60px;width:59.30px;height:22.90px;" ></div>
<div class="row" style="left:381.30px;top:596.60px;width:451.60px;height:22.90px;" ></div>
<div class="row" style="left:837.70px;top:596.60px;width:262.30px;height:22.90px;" ></div>
<div class="row" style="left:248.00px;top:623.40px;width:59.20px;height:22.90px;" ></div>
<div class="row" style="left:314.80px;top:623.40px;width:59.30px;height:22.90px;" ></div>
<div class="row" style="left:381.30px;top:623.40px;width:451.60px;height:22.90px;" ></div>
<div class="row" style="left:837.70px;top:623.40px;width:262.30px;height:22.90px;" ></div>
<div class="row" style="left:248.00px;top:650.20px;width:59.20px;height:22.90px;" ></div>
<div class="row" style="left:314.80px;top:650.20px;width:59.30px;height:22.90px;" ></div>
<div class="row" style="left:381.30px;top:650.20px;width:451.60px;height:22.90px;" ></div>
<div class="row" style="left:837.70px;top:650.20px;width:262.30px;height:22.90px;" ></div>
<div class="row" style="left:248.00px;top:677.00px;width:59.20px;height:22.90px;" ></div>
<div class="row" style="left:314.80px;top:677.00px;width:59.30px;height:22.90px;" ></div>
<div class="row" style="left:381.30px;top:677.00px;width:451.60px;height:22.90px;" ></div>
<div class="row" style="left:837.70px;top:677.00px;width:262.30px;height:22.90px;" ></div>
<div class="row" style="left:248.00px;top:703.80px;width:59.20px;height:22.90px;" ></div>
<div class="row" style="left:314.80px;top:703.80px;width:59.30px;height:22.90px;" ></div>
<div class="row" style="left:381.30px;top:703.80px;width:451.60px;height:22.90px;" ></div>
<div class="row" style="left:837.70px;top:703.80px;width:262.30px;height:22.90px;" ></div>
<div class="row" style="left:248.00px;top:730.60px;width:59.20px;height:22.90px;" ></div>
<div class="row" style="left:314.80px;top:730.60px;width:59.30px;height:22.90px;" ></div>
<div class="row" style="left:381.30px;top:730.60px;width:451.60px;height:22.90px;" ></div>
<div class="row" style="left:837.70px;top:730.60px;width:262.30px;height:22.90px;" ></div>
<div class="row" style="left:248.00px;top:757.40px;width:59.20px;height:22.90px;" ></div>
<div class="row" style="left:314.80px;top:757.40px;width:59.30px;height:22.90px;" ></div>
<div class="row" style="left:381.30px;top:757.40px;width:451.60px;height:22.90px;" ></div>
<div class="row" style="left:837.70px;top:757.40px;width:262.30px;height:22.90px;" ></div>
<div class="row" style="left:248.00px;top:784.20px;width:59.20px;height:22.90px;" ></div>
<div class="row" style="left:314.80px;top:784.20px;width:59.30px;height:22.90px;" ></div>
<div class="row" style="left:381.30px;top:784.20px;width:451.60px;height:22.90px;" ></div>
<div class="row" style="left:837.70px;top:784.20px;width:262.30px;height:22.90px;" ></div>
<div class="row" style="left:248.00px;top:811.00px;width:59.20px;height:22.90px;" ></div>
<div class="row" style="left:314.80px;top:811.00px;width:59.30px;height:22.90px;" ></div>
<div class="row" style="left:381.30px;top:811.00px;width:451.60px;height:22.90px;" ></div>
<div class="row" style="left:837.70px;top:811.00px;width:262.30px;height:22.90px;" ></div>
<div class="row" style="left:248.00px;top:837.80px;width:59.20px;height:22.90px;" ></div>
<div class="row" style="left:314.80px;top:837.80px;width:59.30px;height:22.90px;" ></div>
<div class="row" style="left:381.30px;top:837.80px;width:451.60px;height:22.90px;" ></div>
<div class="row" style="left:837.70px;top:837.80px;width:262.30px;height:22.90px;" ></div>
<div class="row" style="left:248.00px;top:864.60px;width:59.20px;height:22.90px;" ></div>
<div class="row" style="left:314.80px;top:864.60px;width:59.30px;height:22.90px;" ></div>
<div class="row" style="left:381.30px;top:864.60px;width:451.60px;height:22.90px;" ></div>
<div class="row" style="left:837.70px;top:864.60px;width:262.30px;height:22.90px;" ></div>
</body></html>
